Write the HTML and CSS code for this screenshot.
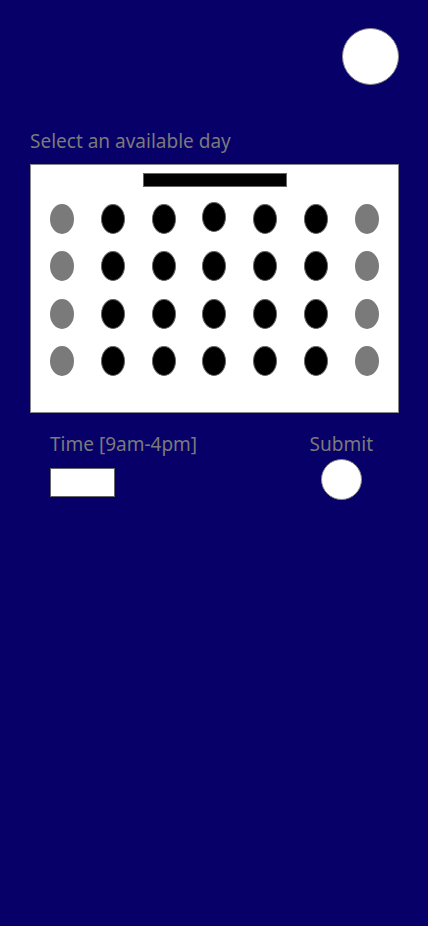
FILE: index.html
```html
<!DOCTYPE html>
<html>
<head>
<meta charset="utf-8">
<link rel="stylesheet" href="styles.css">
</head>
<body>
<div class="page">
  <div class="top">
    <div class="avatar"></div>
  </div>
  <div class="label">Select an available day</div>
  <div class="calendar">
    <div class="month-bar"></div>
    <div class="days">
      <span class="day off"></span><span class="day"></span><span class="day"></span><span class="day up"></span><span class="day"></span><span class="day"></span><span class="day off"></span>
      <span class="day off"></span><span class="day"></span><span class="day"></span><span class="day"></span><span class="day"></span><span class="day"></span><span class="day off"></span>
      <span class="day off"></span><span class="day"></span><span class="day"></span><span class="day"></span><span class="day"></span><span class="day"></span><span class="day off"></span>
      <span class="day off"></span><span class="day"></span><span class="day"></span><span class="day"></span><span class="day"></span><span class="day"></span><span class="day off"></span>
    </div>
  </div>
  <div class="bottom">
    <div class="time">
      <div class="label small">Time [9am-4pm]</div>
      <div class="time-input"></div>
    </div>
    <div class="submit">
      <div class="label small">Submit</div>
      <div class="submit-btn"></div>
    </div>
  </div>
</div>
</body>
</html>
```

FILE: styles.css
```css
html, body {
  margin: 0;
  padding: 0;
  background: #070069;
  height: 100%;
}
.page {
  font-family: "Noto Sans", "Open Sans", sans-serif;
  display: flex;
  flex-direction: column;
}
.top {
  display: flex;
  justify-content: flex-end;
  padding: 28px 29px 0 0;
}
.avatar {
  width: 55px;
  height: 55px;
  border-radius: 50%;
  background: #fff;
  border: 1px solid #888;
}
.label {
  color: #7a7a7a;
  font-size: 19px;
  line-height: 24px;
}
.page > .label {
  margin: 44px 0 0 30px;
}
.calendar {
  margin: 11px 29px 0 30px;
  height: 247px;
  background: #fff;
  border: 1px solid #888;
  display: flex;
  flex-direction: column;
  align-items: center;
}
.month-bar {
  margin-top: 8px;
  width: 142px;
  height: 12px;
  background: #000;
  border: 1px solid #666;
}
.days {
  align-self: stretch;
  margin-top: 8px;
  padding: 0 6px;
  display: grid;
  grid-template-columns: repeat(7, 1fr);
  grid-auto-rows: 47.5px;
  align-items: center;
  justify-items: center;
}
.day {
  width: 22px;
  height: 28px;
  border-radius: 50%;
  background: #000;
  border: 1px solid #666;
}
.day.up {
  transform: translateY(-2px);
}
.day.off {
  width: 24px;
  height: 30px;
  border: 0;
  background: #7a7a7a;
}
.bottom {
  display: flex;
  justify-content: space-between;
  padding: 19px 55px 0 50px;
}
.time {
  display: flex;
  flex-direction: column;
}
.time-input {
  margin-top: 12px;
  width: 63px;
  height: 27px;
  background: #fff;
  border: 1px solid #666;
}
.submit {
  display: flex;
  flex-direction: column;
  align-items: center;
}
.submit-btn {
  margin-top: 3px;
  width: 39px;
  height: 39px;
  border-radius: 50%;
  background: #fff;
  border: 1px solid #888;
}
```
